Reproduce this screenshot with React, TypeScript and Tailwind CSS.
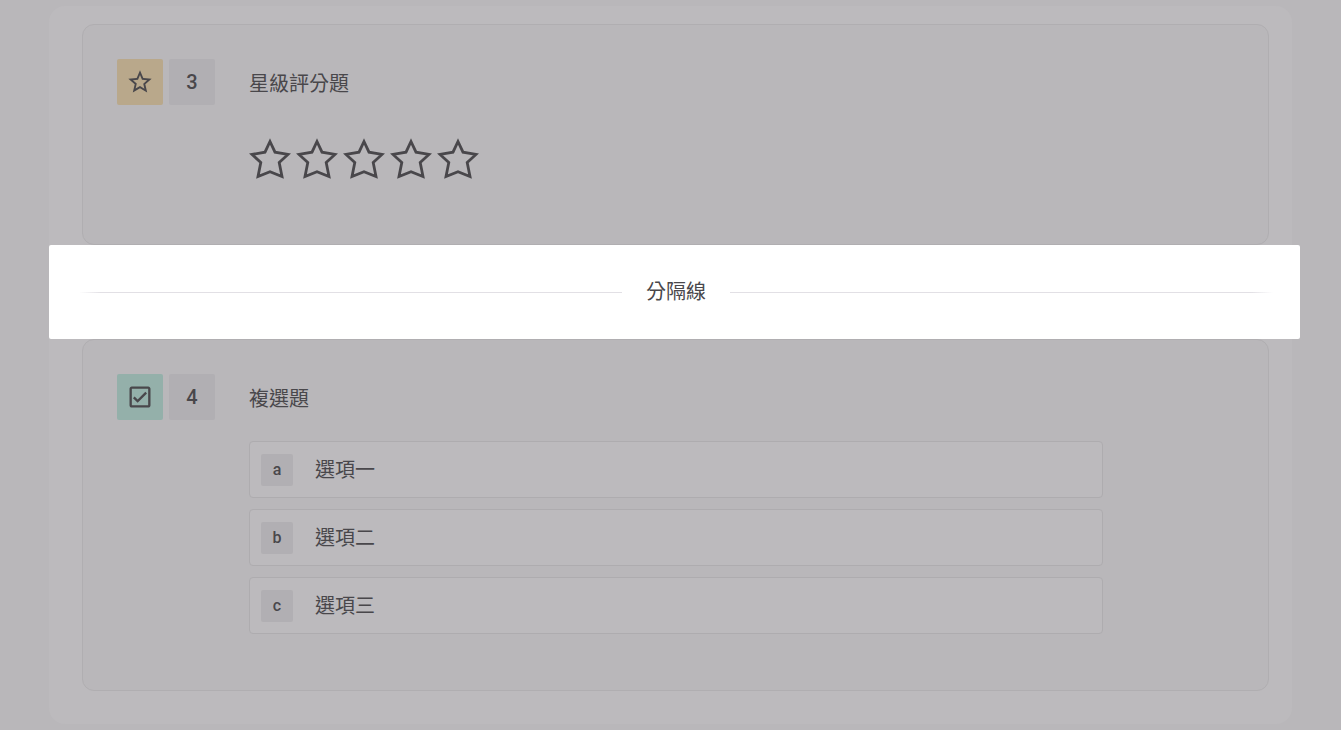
import React from 'react';
import { MdOutlineCheckBox, MdStarBorder } from 'react-icons/md';

const OPTIONS = [
  { key: 'a', label: '選項一' },
  { key: 'b', label: '選項二' },
  { key: 'c', label: '選項三' },
];

function RatingStar() {
  return (
    <svg viewBox="0 0 42 46" className="h-[46px] w-[42px]" fill="none" stroke="currentColor" strokeWidth={2.8} aria-hidden="true">
      <polygon points="21,5.5 26,16.2 39,18.4 30.2,26.6 33,40.6 21,35.8 9,40.6 11.8,26.6 3,18.4 16,16.2" />
    </svg>
  );
}

interface QuestionProps {
  index: number;
  title: string;
  icon: React.ReactNode;
  tone: string;
  className: string;
  children: React.ReactNode;
}

function Question({ index, title, icon, tone, className, children }: QuestionProps) {
  return (
    <section className={`flex rounded-xl border border-[#b0aeb1] bg-[#b9b7ba] px-[34px] pt-[34px] ${className}`}>
      <div className="flex shrink-0 gap-1.5">
        <div className={`flex size-[46px] items-center justify-center rounded-xs ${tone}`}>{icon}</div>
        <div className="flex size-[46px] items-center justify-center rounded-xs bg-[#b1afb3] text-xl font-medium">{index}</div>
      </div>
      <div className="ml-[34px] min-w-0 flex-1">
        <h2 className="text-xl leading-[50px]">{title}</h2>
        {children}
      </div>
    </section>
  );
}

function Divider({ label }: { label: string }) {
  return (
    <div className="-mr-[31px] -ml-[33px] flex items-center gap-6 rounded-xs bg-white py-8 pr-[27px] pl-[30px]">
      <div className="h-px flex-1 bg-linear-to-r from-white via-[#e2e0e5] via-4% to-[#e2e0e5]" />
      <span className="text-xl leading-[30px]">{label}</span>
      <div className="h-px flex-1 bg-linear-to-l from-white via-[#e2e0e5] via-4% to-[#e2e0e5]" />
    </div>
  );
}

export default function App() {
  return (
    <div className="min-h-screen bg-[#b9b7ba] px-[49px] py-1.5 font-[Roboto,'Noto_Sans_CJK_TC',sans-serif] text-[#49474b]">
      <main className="rounded-2xl bg-[#bcbabd] pt-[18px] pr-[23px] pb-[33px] pl-[33px]">
        <Question
          index={3}
          title="星級評分題"
          tone="bg-[#b9a88b]"
          icon={<MdStarBorder className="size-7" />}
          className="pb-[62px]"
        >
          <div className="mt-[27px] flex gap-[5px]">
            {[1, 2, 3, 4, 5].map((n) => (
              <button key={n} type="button" aria-label={`${n} 星`}>
                <RatingStar />
              </button>
            ))}
          </div>
        </Question>

        <Divider label="分隔線" />

        <Question
          index={4}
          title="複選題"
          tone="bg-[#94b0aa]"
          icon={<MdOutlineCheckBox className="size-7" />}
          className="pb-14"
        >
          <div className="mt-[17px] mr-[131px] flex flex-col gap-[11px]">
            {OPTIONS.map((option) => (
              <button
                key={option.key}
                type="button"
                className="flex h-[57px] items-center gap-[22px] rounded-sm border border-[#aeacaf] bg-[#bcbabd] px-[11px] text-left"
              >
                <span className="flex size-8 items-center justify-center rounded-xs bg-[#b1afb3] text-base font-medium">
                  {option.key}
                </span>
                <span className="text-xl">{option.label}</span>
              </button>
            ))}
          </div>
        </Question>
      </main>
    </div>
  );
}
